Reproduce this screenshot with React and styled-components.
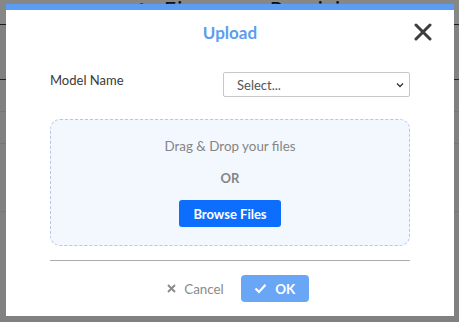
import React from 'react';
import styled, { createGlobalStyle } from 'styled-components';

const GlobalStyle = createGlobalStyle`
  html, body {
    margin: 0;
    padding: 0;
    width: 459px;
    height: 322px;
    overflow: hidden;
    background: #f4f4f4;
    font-family: Lato, "Liberation Sans", sans-serif;
  }
`;

const App = () => {
  const [model, setModel] = React.useState('');

  return (
    <>
      <GlobalStyle />
      <Page>
        <PageHeader>
          <HeaderIcon viewBox="0 0 20 20">
            <circle cx="6" cy="6" r="3" fill="none" stroke="#333" strokeWidth="2" />
            <circle cx="14" cy="14" r="3" fill="none" stroke="#333" strokeWidth="2" />
          </HeaderIcon>
          Firmware Provision
        </PageHeader>
        <Table>
          <TableRow $dark />
          <TableRow />
          <TableRow $height={67} />
          <TableRow $height={20} />
        </Table>
      </Page>
      <Overlay />
      <Modal>
        <Header>
          <Title>Upload</Title>
          <CloseButton aria-label="close">
            <svg width="18" height="18" viewBox="0 0 18 18">
              <path d="M2 2 L16 16 M16 2 L2 16" stroke="#3d3d3d" strokeWidth="3" strokeLinecap="round" />
            </svg>
          </CloseButton>
        </Header>
        <Body>
          <FieldRow>
            <Label>Model Name</Label>
            <SelectWrap>
              <Select value={model} onChange={(e) => setModel(e.target.value)}>
                <option value="">Select...</option>
              </Select>
              <Chevron viewBox="0 0 8 6">
                <path d="M1 1.5 L4 4.5 L7 1.5" fill="none" stroke="#333" strokeWidth="1.3" />
              </Chevron>
            </SelectWrap>
          </FieldRow>
          <DropZone>
            <DropText>Drag &amp; Drop your files</DropText>
            <OrText>OR</OrText>
            <BrowseButton>Browse Files</BrowseButton>
          </DropZone>
          <Divider />
          <Footer>
            <CancelButton>
              <svg width="9" height="9" viewBox="0 0 9 9">
                <path d="M1 1 L8 8 M8 1 L1 8" stroke="#8a8a8a" strokeWidth="1.9" />
              </svg>
              Cancel
            </CancelButton>
            <OkButton>
              <svg width="13" height="11" viewBox="0 0 13 11">
                <path d="M1.5 5.5 L5 9 L11.5 1.8" fill="none" stroke="#fff" strokeWidth="2.2" />
              </svg>
              OK
            </OkButton>
          </Footer>
        </Body>
      </Modal>
    </>
  );
};

export default App;

const Page = styled.div`
  display: flex;
  flex-direction: column;
  height: 322px;
`;

const PageHeader = styled.div`
  display: flex;
  align-items: center;
  gap: 14px;
  height: 32px;
  margin-top: -8px;
  padding-left: 138px;
  background: #fff;
  border-bottom: 1px solid #333;
  font-size: 21px;
  letter-spacing: 1.5px;
  color: #222;
`;

const HeaderIcon = styled.svg`
  width: 12px;
  height: 12px;
`;

const Table = styled.div`
  display: flex;
  flex-direction: column;
  margin-top: 54px;
`;

const TableRow = styled.div`
  height: ${(p) => p.$height || 31}px;
  border-top: 1px solid ${(p) => (p.$dark ? '#444' : '#e0e0e0')};
`;

const Overlay = styled.div`
  position: fixed;
  inset: 0;
  background: rgba(0, 0, 0, 0.47);
`;

const Modal = styled.div`
  position: fixed;
  top: 4px;
  left: 6px;
  width: 448px;
  height: 312px;
  box-sizing: border-box;
  background: #fff;
  border-top: 6px solid #5b9df0;
  display: flex;
  flex-direction: column;
`;

const Header = styled.div`
  position: relative;
  height: 45px;
  display: flex;
  justify-content: center;
  align-items: center;
`;

const Title = styled.h2`
  margin: 0;
  font-size: 17px;
  font-weight: 700;
  color: #5b9df0;
`;

const CloseButton = styled.button`
  position: absolute;
  right: 22px;
  top: 13px;
  padding: 0;
  border: none;
  background: transparent;
  display: flex;
  cursor: pointer;
`;

const Body = styled.div`
  display: flex;
  flex-direction: column;
  padding: 17px 44px 14px;
`;

const FieldRow = styled.div`
  display: flex;
  justify-content: space-between;
  align-items: flex-start;
  height: 25px;
`;

const Label = styled.label`
  font-size: 13px;
  line-height: 16px;
  color: #3a3a3a;
`;

const SelectWrap = styled.div`
  position: relative;
  width: 187px;
  height: 25px;
`;

const Select = styled.select`
  appearance: none;
  width: 100%;
  height: 100%;
  box-sizing: border-box;
  border: 1px solid #c8c8c8;
  border-radius: 2px;
  background: #fff;
  padding: 0 0 0 13px;
  font-family: Lato, "Liberation Sans", sans-serif;
  font-size: 13px;
  color: #555;
  outline: none;
`;

const Chevron = styled.svg`
  position: absolute;
  right: 6px;
  top: 10px;
  width: 8px;
  height: 6px;
  pointer-events: none;
`;

const DropZone = styled.div`
  margin-top: 22px;
  height: 127px;
  box-sizing: border-box;
  border: 1px dashed #b9c4e6;
  border-radius: 10px;
  background: #f3f8ff;
  display: flex;
  flex-direction: column;
  align-items: center;
  padding-top: 17px;
`;

const DropText = styled.div`
  font-size: 13.4px;
  line-height: 18px;
  color: #858585;
`;

const OrText = styled.div`
  margin-top: 14px;
  font-size: 13px;
  line-height: 18px;
  font-weight: 700;
  color: #858585;
`;

const BrowseButton = styled.button`
  margin-top: 13px;
  width: 102px;
  height: 27px;
  border: none;
  border-radius: 3px;
  background: #0d6efd;
  color: #fff;
  font-family: Lato, "Liberation Sans", sans-serif;
  font-size: 13px;
  font-weight: 700;
  cursor: pointer;
`;

const Divider = styled.hr`
  margin: 14px 0 0;
  border: none;
  border-top: 1px solid #ababab;
`;

const Footer = styled.div`
  margin-top: 14px;
  padding-left: 4px;
  display: flex;
  justify-content: center;
  gap: 5px;
`;

const CancelButton = styled.button`
  height: 27px;
  padding: 0 12px;
  border: none;
  background: transparent;
  display: flex;
  align-items: center;
  gap: 8px;
  font-family: Lato, "Liberation Sans", sans-serif;
  font-size: 13.4px;
  color: #8a8a8a;
  cursor: pointer;
`;

const OkButton = styled.button`
  width: 68px;
  height: 27px;
  border: none;
  border-radius: 4px;
  background: #6aa6f6;
  display: flex;
  align-items: center;
  justify-content: center;
  gap: 8px;
  font-family: Lato, "Liberation Sans", sans-serif;
  font-size: 13.4px;
  font-weight: 700;
  color: #fff;
  cursor: pointer;
`;
